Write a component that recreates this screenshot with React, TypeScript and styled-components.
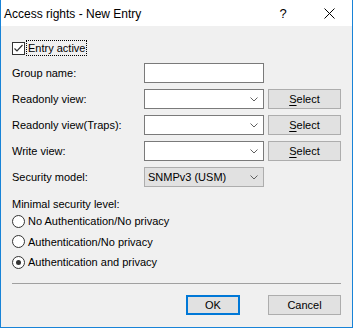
import React, { FunctionComponent } from 'react';
import styled, { createGlobalStyle } from 'styled-components';

const GlobalStyle = createGlobalStyle`
  html, body {
    margin: 0;
    padding: 0;
    background: #ffffff;
  }
  body {
    font-family: "Liberation Sans", Arial, sans-serif;
    font-size: 11px;
    color: #000;
  }
`;

const Window = styled.div`
  width: 353px;
  height: 328px;
  box-sizing: border-box;
  border: 1px solid #1883d7;
  border-top: none;
  background: #f0f0f0;
  display: flex;
  flex-direction: column;
`;

const TitleBar = styled.div`
  height: 26px;
  background: #fff;
  display: flex;
  align-items: center;
  padding-left: 3px;
`;

const Title = styled.div`
  flex: 1;
  font-size: 12px;
  padding-top: 1px;
`;

const TitleButton = styled.div`
  width: 46px;
  height: 26px;
  display: flex;
  align-items: center;
  justify-content: center;
  font-size: 13px;
`;

const Body = styled.div`
  flex: 1;
  padding: 15px 11px 0 11px;
  display: flex;
  flex-direction: column;
`;

const CheckRow = styled.div`
  display: flex;
  align-items: center;
  height: 14px;
  gap: 2px;
`;

const Box = styled.div<{ round?: boolean }>`
  width: 13px;
  height: 13px;
  box-sizing: border-box;
  border: 1px solid #333;
  background: #fff;
  border-radius: ${p => (p.round ? '50%' : '0')};
  display: flex;
  align-items: center;
  justify-content: center;
  flex: none;
`;

const Dot = styled.div`
  width: 5px;
  height: 5px;
  border-radius: 50%;
  background: #333;
`;

const Focused = styled.span`
  outline: 1px dotted #000;
  outline-offset: 0;
  padding: 0 1px;
  line-height: 14px;
`;

const Form = styled.div`
  margin-top: 8px;
  display: grid;
  grid-template-columns: 128px 120px 73px;
  grid-auto-rows: 20px;
  column-gap: 4px;
  row-gap: 6px;
  align-items: center;
`;

const TextBox = styled.div`
  height: 20px;
  box-sizing: border-box;
  border: 1px solid #7a7a7a;
  background: #fff;
`;

const Combo = styled.div<{ filled?: boolean }>`
  height: 20px;
  box-sizing: border-box;
  border: 1px solid ${p => (p.filled ? '#adadad' : '#7a7a7a')};
  background: ${p => (p.filled ? '#e1e1e1' : '#fff')};
  display: flex;
  align-items: center;
  padding: 0 5px 0 3px;
`;

const ComboText = styled.span`
  flex: 1;
`;

const Button = styled.div<{ primary?: boolean; width?: number }>`
  height: 20px;
  width: ${p => p.width ?? 73}px;
  box-sizing: border-box;
  border: ${p => (p.primary ? '2px solid #0078d7' : '1px solid #adadad')};
  background: #e1e1e1;
  display: flex;
  align-items: center;
  justify-content: center;
  u {
    text-decoration: underline;
    text-underline-offset: 2px;
  }
`;

const Section = styled.div`
  margin-top: 10px;
  line-height: 14px;
`;

const RadioList = styled.div`
  display: flex;
  flex-direction: column;
`;

const RadioRow = styled.div`
  display: flex;
  align-items: center;
  gap: 3px;
  height: 20.5px;
`;

const Separator = styled.div`
  margin-top: 10px;
  height: 1px;
  background: #a0a0a0;
`;

const Footer = styled.div`
  margin-top: 11px;
  display: flex;
  justify-content: flex-end;
  gap: 28px;
`;

const Chevron: FunctionComponent = () => (
  <svg width="8" height="5" viewBox="0 0 8 5">
    <polyline points="0.5,0.5 4,4 7.5,0.5" fill="none" stroke="#606060" strokeWidth="1" />
  </svg>
);

const Check: FunctionComponent = () => (
  <svg width="11" height="11" viewBox="0 0 11 11">
    <polyline points="1.5,5.5 4,8 9.5,2" fill="none" stroke="#333" strokeWidth="1.2" />
  </svg>
);

const Close: FunctionComponent = () => (
  <svg width="11" height="11" viewBox="0 0 11 11">
    <path d="M0.5 0.5 L10.5 10.5 M10.5 0.5 L0.5 10.5" stroke="#000" strokeWidth="1" />
  </svg>
);

const SelectButton: FunctionComponent = () => (
  <Button><span><u>S</u>elect</span></Button>
);

const levels = [
  'No Authentication/No privacy',
  'Authentication/No privacy',
  'Authentication and privacy',
];

const App: FunctionComponent = () => (
  <>
    <GlobalStyle />
    <Window>
      <TitleBar>
        <Title>Access rights - New Entry</Title>
        <TitleButton>?</TitleButton>
        <TitleButton><Close /></TitleButton>
      </TitleBar>
      <Body>
        <CheckRow>
          <Box><Check /></Box>
          <Focused>Entry active</Focused>
        </CheckRow>
        <Form>
          <span>Group name:</span>
          <TextBox />
          <span />

          <span>Readonly view:</span>
          <Combo><ComboText /><Chevron /></Combo>
          <SelectButton />

          <span>Readonly view(Traps):</span>
          <Combo><ComboText /><Chevron /></Combo>
          <SelectButton />

          <span>Write view:</span>
          <Combo><ComboText /><Chevron /></Combo>
          <SelectButton />

          <span>Security model:</span>
          <Combo filled><ComboText>SNMPv3 (USM)</ComboText><Chevron /></Combo>
          <span />
        </Form>
        <Section>Minimal security level:</Section>
        <RadioList>
          {levels.map((l, i) => (
            <RadioRow key={l}>
              <Box round>{i === 2 && <Dot />}</Box>
              <span>{l}</span>
            </RadioRow>
          ))}
        </RadioList>
        <Separator />
        <Footer>
          <Button primary width={54}>OK</Button>
          <Button>Cancel</Button>
        </Footer>
      </Body>
    </Window>
  </>
);

export default App;
